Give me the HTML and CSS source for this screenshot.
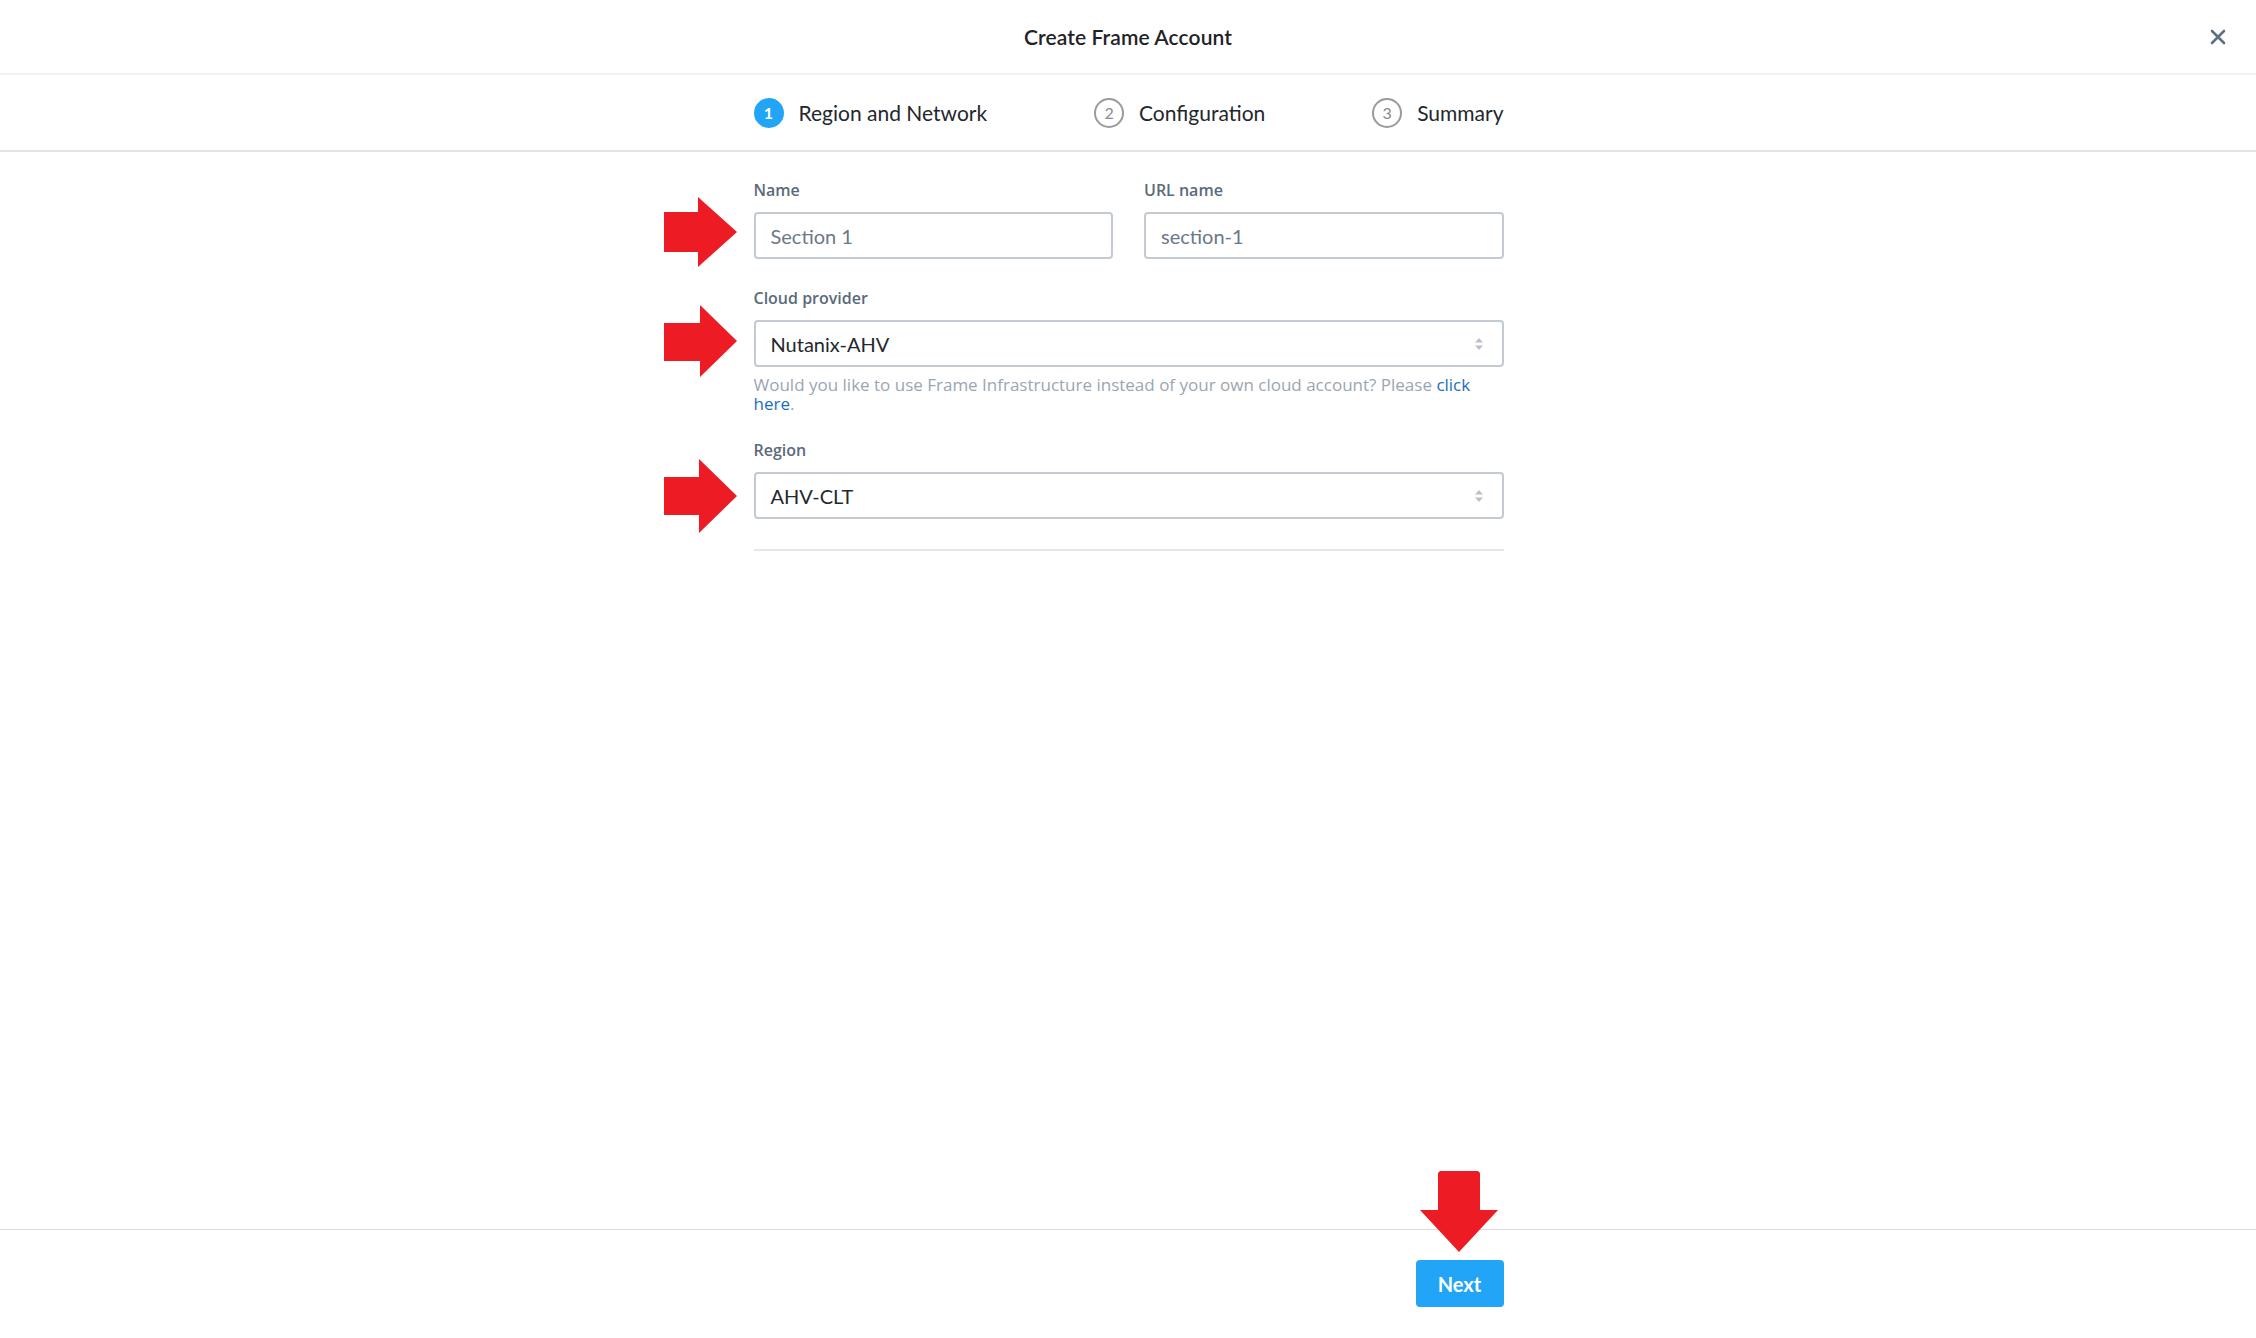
FILE: index.html
```html
<!DOCTYPE html>
<html>
<head>
<meta charset="utf-8">
<link rel="stylesheet" href="styles.css">
</head>
<body>
<div class="page">
  <header class="header">
    <div></div>
    <h1 class="title">Create Frame Account</h1>
    <div class="close-wrap">
      <svg class="close" width="16" height="16" viewBox="0 0 16 16"><path d="M2 2 L14 14 M14 2 L2 14" stroke="#5d7183" stroke-width="2.6" stroke-linecap="round" fill="none"/></svg>
    </div>
  </header>
  <nav class="stepper">
    <div class="steps">
      <div class="step active"><span class="num">1</span><span class="label">Region and Network</span></div>
      <div class="step"><span class="num">2</span><span class="label">Configuration</span></div>
      <div class="step"><span class="num">3</span><span class="label">Summary</span></div>
    </div>
  </nav>
  <main class="main">
    <form class="form">
      <div class="row two">
        <div class="field">
          <label class="flabel">Name</label>
          <div class="control-wrap">
            <svg class="arrow-right" width="73" height="70" viewBox="0 0 73 70"><polygon points="0,15 34,15 34,0 73,35 34,70 34,55 0,55" fill="#ed1c24"/></svg>
            <div class="input muted">Section 1</div>
          </div>
        </div>
        <div class="field">
          <label class="flabel">URL name</label>
          <div class="control-wrap">
            <div class="input muted">section-1</div>
          </div>
        </div>
      </div>
      <div class="row help-row">
        <div class="field">
          <label class="flabel">Cloud provider</label>
          <div class="control-wrap">
            <svg class="arrow-right" width="73" height="72" viewBox="0 0 73 72"><polygon points="0,18 36,18 36,0 73,36 36,72 36,56 0,56" fill="#ed1c24"/></svg>
            <div class="input select"><span>Nutanix-AHV</span>
              <svg class="updown" width="8" height="12" viewBox="0 0 8 12"><polygon points="4,0 8,4.5 0,4.5" fill="#b9c1ca"/><polygon points="0,7.5 8,7.5 4,12" fill="#b9c1ca"/></svg>
            </div>
          </div>
          <p class="help">Would you like to use Frame Infrastructure instead of your own cloud account? Please <a class="link">click here</a>.</p>
        </div>
      </div>
      <div class="row">
        <div class="field">
          <label class="flabel">Region</label>
          <div class="control-wrap">
            <svg class="arrow-right a3" width="73" height="74" viewBox="0 0 73 74"><polygon points="0,18 35,18 35,0 73,37 35,74 35,56 0,56" fill="#ed1c24"/></svg>
            <div class="input select"><span>AHV-CLT</span>
              <svg class="updown" width="8" height="12" viewBox="0 0 8 12"><polygon points="4,0 8,4.5 0,4.5" fill="#b9c1ca"/><polygon points="0,7.5 8,7.5 4,12" fill="#b9c1ca"/></svg>
            </div>
          </div>
        </div>
      </div>
      <hr class="sep">
    </form>
  </main>
  <footer class="footer">
    <div class="footer-inner">
      <div class="btn-wrap">
        <svg class="arrow-down" width="78" height="81" viewBox="0 0 78 81"><polygon points="18,2 20,0 58,0 60,2 60,39 78,39 39,81 0,39 18,39" fill="#ed1c24"/></svg>
        <button class="btn" type="button">Next</button>
      </div>
    </div>
  </footer>
</div>
</body>
</html>
```
FILE: styles.css
```css
* { box-sizing: border-box; }
html, body { margin: 0; padding: 0; background: #fff; }
body { font-family: Lato, "Open Sans", "Liberation Sans", sans-serif; color: #22272e; }
.page { height: 1338px; display: flex; flex-direction: column; }

.header {
  height: 75px;
  border-bottom: 2px solid #f1f1f1;
  display: grid;
  grid-template-columns: 1fr auto 1fr;
  align-items: center;
}
.title { margin: 0; font-size: 21px; font-weight: 600; color: #1f2329; letter-spacing: 0.1px; }
.close-wrap { display: flex; justify-content: flex-end; padding-right: 30px; }
.close { display: block; }

.stepper {
  height: 77px;
  border-bottom: 2px solid #e4e4e4;
  display: flex;
  align-items: center;
  justify-content: center;
}
.steps { width: 750px; display: flex; justify-content: space-between; align-items: center; margin-left: 1px; }
.step { display: flex; align-items: center; gap: 15px; }
.num {
  width: 30px; height: 30px; border-radius: 50%;
  border: 2px solid #9a9a9a; color: #8a8a8a;
  display: flex; align-items: center; justify-content: center;
  font-size: 16px; line-height: 1;
}
.step.active .num { background: #22a5f7; border-color: #22a5f7; color: #fff; font-weight: 700; }
.label { font-size: 21px; color: #22272e; }

.main { flex: 1; display: flex; justify-content: center; }
.form { width: 750px; padding-top: 29px; margin-left: 1px; }
.row { margin-bottom: 30px; }
.row.help-row { margin-bottom: 28px; }
.row.two { display: flex; gap: 31px; }
.row.two .field { flex: 1; }
.flabel {
  display: block;
  font-family: "Open Sans", Lato, sans-serif;
  font-size: 16px; line-height: 18px; font-weight: 600;
  color: #5a6a7b; margin-bottom: 13px;
}
.control-wrap { position: relative; }
.input {
  height: 47px;
  border: 2px solid #c3cad2;
  border-radius: 4px;
  padding: 0 15px;
  display: flex; align-items: center;
  font-size: 20px;
  color: #23282e;
}
.input.muted { color: #6b7888; }
.select { justify-content: space-between; padding-right: 19px; }
.updown { display: block; }
.arrow-right { position: absolute; left: -90px; top: -15px; }
.arrow-right.a3 { top: -13px; }
.help {
  margin: 8px 0 0;
  font-family: "Open Sans", Lato, sans-serif;
  font-size: 17px; line-height: 19px; color: #9ba6b2;
}
.link { color: #1a6fb8; }
.sep { border: 0; border-top: 2px solid #e6e6e6; margin: 30px 0 0; }

.footer { height: 109px; border-top: 1px solid #dcdcdc; display: flex; justify-content: center; }
.footer-inner { width: 750px; display: flex; justify-content: flex-end; padding-top: 30px; margin-left: 1px; }
.btn-wrap { position: relative; height: 47px; }
.btn {
  height: 47px; width: 88px;
  background: #22a5f7; color: #fff;
  border: 0; border-radius: 4px;
  font-family: inherit; font-size: 20px; font-weight: 700;
}
.arrow-down { position: absolute; left: 4px; top: -89px; }
```
